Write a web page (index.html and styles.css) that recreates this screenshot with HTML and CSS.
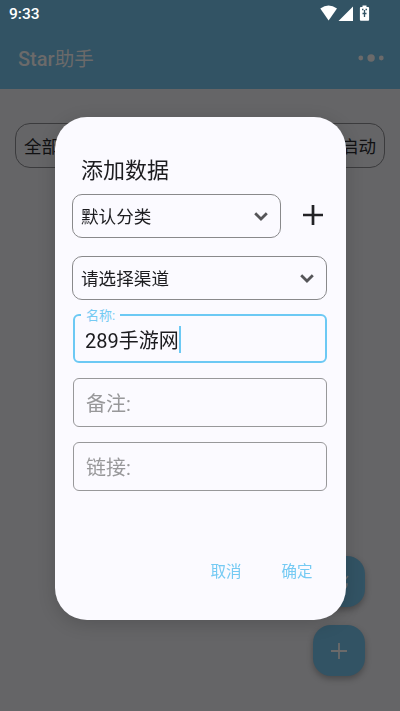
FILE: index.html
```html
<!DOCTYPE html>
<html lang="zh-CN">
<head>
<meta charset="utf-8">
<title>Star助手</title>
<link rel="stylesheet" href="styles.css">
</head>
<body>
<div class="app">
  <header class="header">
    <div class="status">
      <span class="clock">9:33</span>
      <svg class="status-icons" width="50" height="17" viewBox="0 0 50 17" fill="#fff">
        <path d="M0.3 3.500Q8.500-2.300 17 3.500L8.600 15.500Z"/>
        <path d="M33 1.500V16H18.500Z"/>
        <path d="M42.500 0.600h4v1.400h1.600q1 0 1 1v11.800q0 1-1 1h-7.200q-1 0-1-1V3q0-1 1-1h1.600z"/>
        <path d="M44.500 5v7M42.500 8.500h4M42 4.500h1.500M45.500 4.500h1.500" fill="none" stroke="#325364" stroke-width="1.300"/>
      </svg>
    </div>
    <div class="appbar">
      <h1 class="app-title">Star<span class="cjk">助手</span></h1>
      <svg class="more" width="26" height="10" viewBox="0 0 26 10" fill="#6b6a6a">
        <circle cx="2.800" cy="5" r="2.400"/><circle cx="13.100" cy="5" r="3.700"/><circle cx="23.300" cy="5" r="2.400"/>
      </svg>
    </div>
  </header>
  <main class="content">
    <div class="filter"><span>全部</span></div>
    <div class="filter filter-end"><span>启动</span></div>
  </main>
  <div class="fabs">
    <div class="fab">
      <svg width="22" height="22" viewBox="0 0 22 22" fill="none" stroke="#6b6a6a" stroke-width="1.500"><path d="M3 18l2-6L16 4M13 9h4l3-4M13 13h6q0 4-4 5"/></svg>
    </div>
    <div class="fab">
      <svg width="16" height="16" viewBox="0 0 16 16" stroke="#6b6a6a" stroke-width="1.800"><path d="M8 0v16M0 8h16"/></svg>
    </div>
  </div>
</div>
<div class="overlay">
  <section class="dialog">
    <h2 class="dialog-title">添加数据</h2>
    <div class="row">
      <div class="select select-short"><span>默认分类</span>
        <svg class="chevron" width="14" height="9" viewBox="0 0 14 9" fill="none" stroke="#555558" stroke-width="2.800"><path d="M1.200 1.200L7 7l5.800-5.800"/></svg>
      </div>
      <svg class="add" width="20" height="20" viewBox="0 0 20 20" stroke="#222225" stroke-width="2.700"><path d="M10 0v20M0 10h20"/></svg>
    </div>
    <div class="select select-channel"><span>请选择渠道</span>
      <svg class="chevron" width="14" height="9" viewBox="0 0 14 9" fill="none" stroke="#555558" stroke-width="2.800"><path d="M1.200 1.200L7 7l5.800-5.800"/></svg>
    </div>
    <div class="field field-active">
      <span class="label">名称:</span>
      <span>289手游网</span><i class="caret"></i>
    </div>
    <div class="field"><span>备注:</span></div>
    <div class="field"><span>链接:</span></div>
    <div class="actions"><span>取消</span><span>确定</span></div>
  </section>
</div>
</body>
</html>
```
FILE: styles.css
```css
* { box-sizing: border-box; }
body {
  margin: 0;
  height: 711px;
  overflow: hidden;
  background: #656567;
  font-family: Roboto, "Noto Sans CJK SC", sans-serif;
  color: #1c1c1f;
}
.app { position: relative; height: 711px; }
.header { height: 89px; background: #325364; }
.status {
  height: 28px;
  padding: 5px 30px 0 9px;
  display: flex;
  justify-content: space-between;
  align-items: flex-start;
  color: #fff;
}
.clock { font-size: 15.500px; line-height: 18px; font-weight: 500; }
.appbar {
  height: 61px;
  padding: 0 16px 0 18px;
  display: flex;
  align-items: center;
  justify-content: space-between;
}
.app-title {
  margin: 1px 0 0;
  font-size: 20px;
  line-height: 28px;
  font-weight: 500;
  color: #6b6a6a;
}
.more { margin-bottom: 2px; }
.cjk { font-weight: 400; font-size: 19.500px; }
.content {
  display: flex;
  justify-content: space-between;
  padding: 34px 15px 0;
}
.filter {
  width: 110px;
  height: 45px;
  padding: 0 8px;
  border: 1px solid #3b3b3d;
  border-radius: 15px;
  display: flex;
  align-items: center;
  font-size: 17.500px;
  color: #111113;
}
.filter-end { justify-content: flex-end; }
.fabs {
  position: absolute;
  right: 35px;
  bottom: 35px;
  display: flex;
  flex-direction: column;
  gap: 18px;
}
.fab {
  width: 52px;
  height: 51px;
  border-radius: 18px;
  background: #325364;
  box-shadow: 0 3px 6px rgba(0, 0, 0, .28);
  display: flex;
  align-items: center;
  justify-content: center;
}
.overlay {
  position: fixed;
  inset: 0;
  display: flex;
  justify-content: center;
  align-items: flex-start;
  padding-top: 117px;
}
.dialog {
  width: 291px;
  height: 503px;
  padding: 38px 18px 0 17.500px;
  border-radius: 32px;
  background: #fbfaff;
  box-shadow: 0 4px 18px rgba(0, 0, 0, .16);
}
.dialog-title {
  margin: 0 0 7px 9px;
  font-size: 22px;
  line-height: 32px;
  font-weight: 400;
}
.row { display: flex; align-items: center; }
.add { margin: 0 0 2px 22px; }
.select {
  width: 255px;
  height: 44px;
  padding: 0 12px 0 8px;
  border: 1px solid #89898b;
  border-radius: 10px;
  display: flex;
  align-items: center;
  justify-content: space-between;
  font-size: 17.600px;
}
.select span { margin-bottom: 1px; }
.select-short { width: 209px; }
.select-channel { margin-top: 18px; }
.field {
  position: relative;
  width: 254px;
  height: 49px;
  margin: 15px 0 0 1px;
  padding-left: 12px;
  border: 1px solid #98989a;
  border-radius: 6px;
  display: flex;
  align-items: center;
  font-size: 20px;
  color: #98989a;
}
.field-active {
  margin-top: 14px;
  padding: 1px 0 0 10px;
  border: 2px solid #6cc9f4;
  color: #1c1c1f;
}
.label {
  position: absolute;
  left: 6px;
  top: -9px;
  padding: 0 5px;
  background: #fbfaff;
  color: #75caf3;
  font-size: 13px;
  line-height: 18px;
}
.caret { width: 2px; height: 27px; background: #6cc9f4; }
.actions {
  display: flex;
  justify-content: flex-end;
  gap: 40px;
  margin: 70px 15px 0 0;
  font-size: 15.500px;
  line-height: 23px;
  color: #75caf3;
}
```
